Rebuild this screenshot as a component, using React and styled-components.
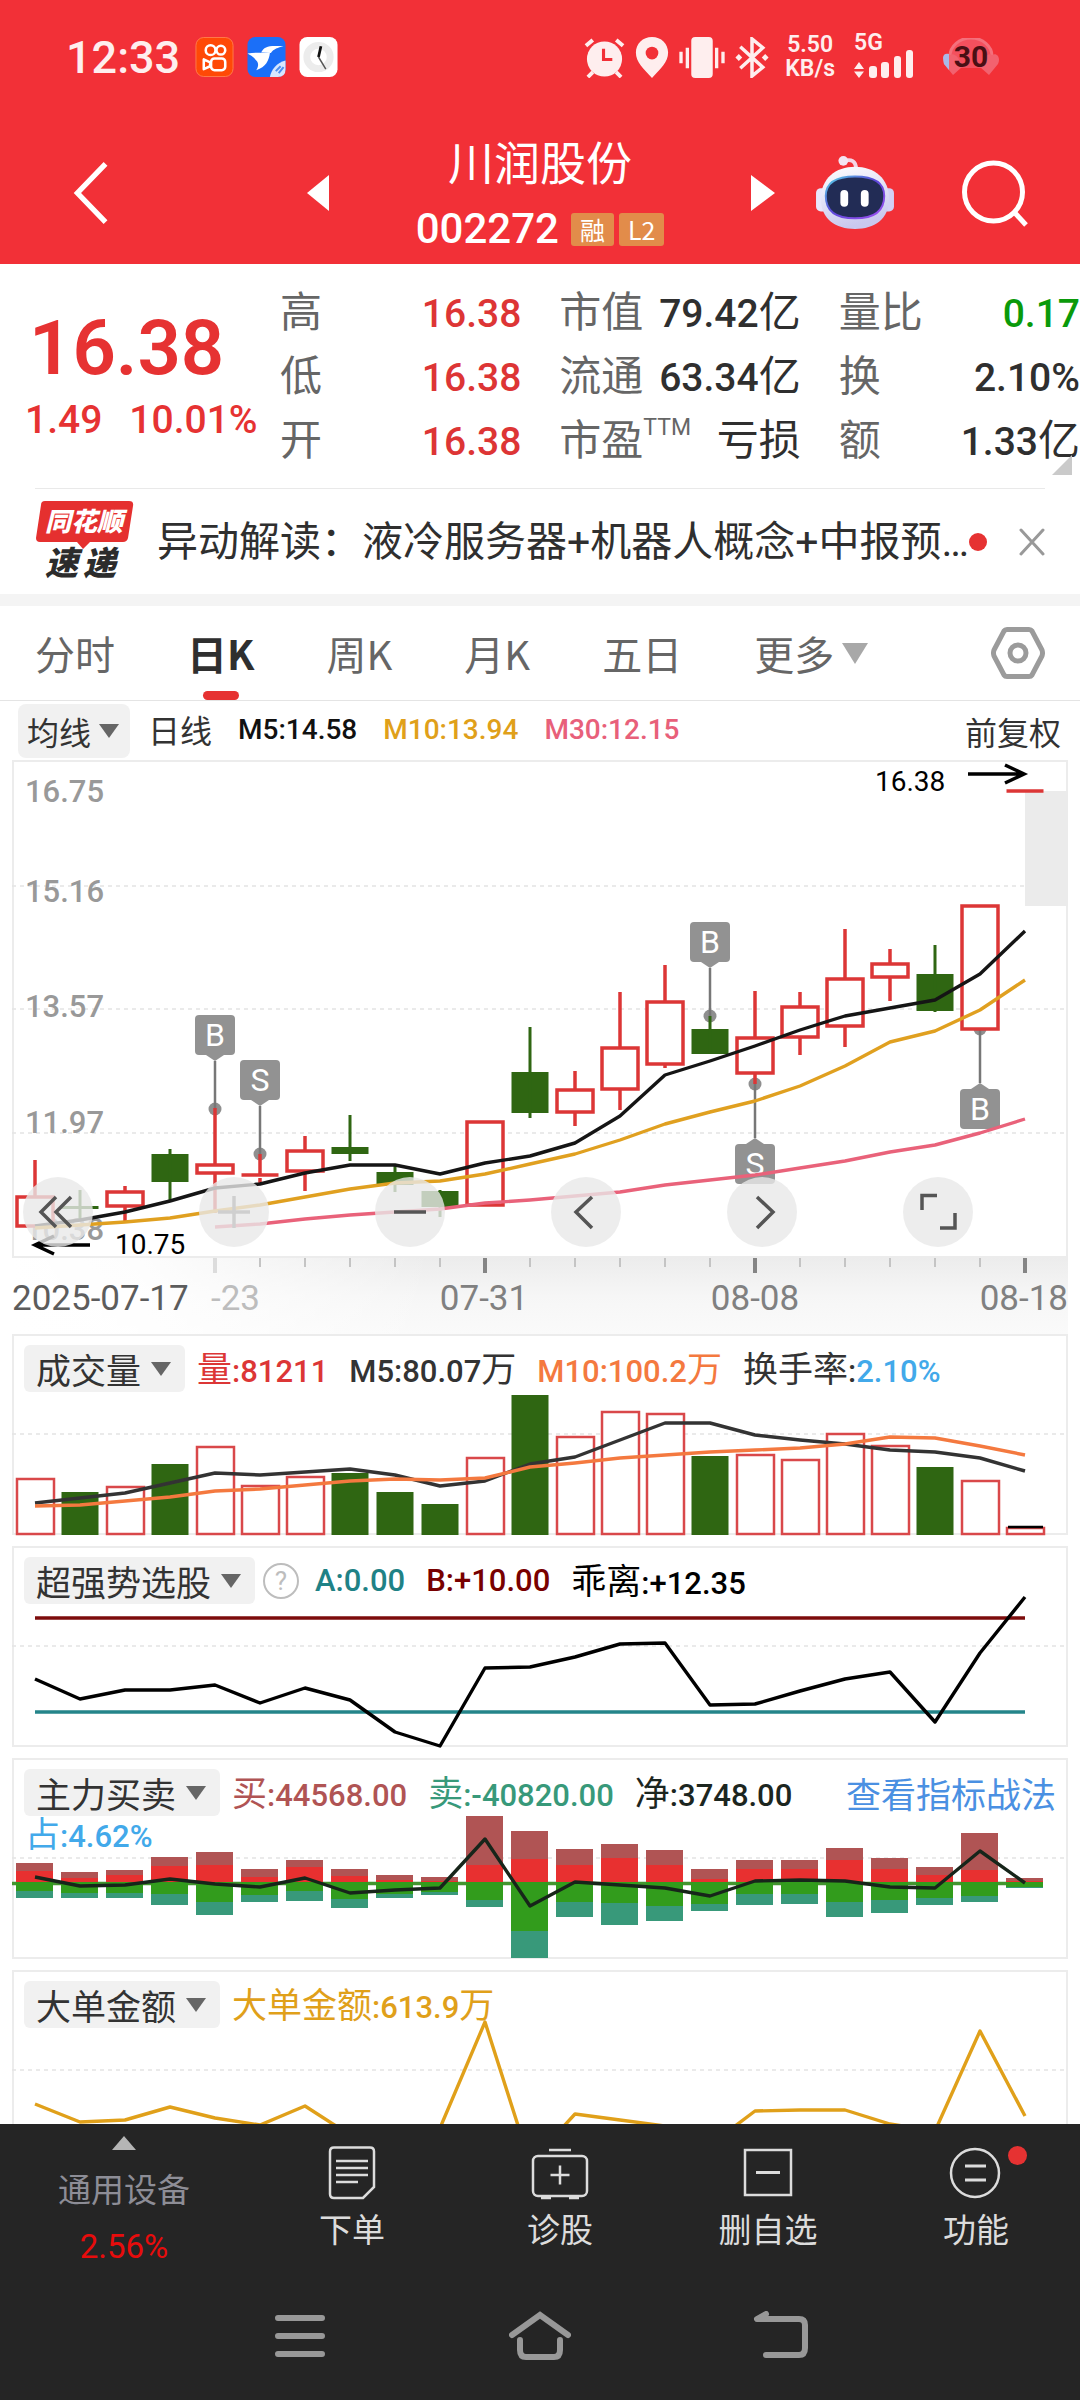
import React from "react";
import styled, { createGlobalStyle } from "styled-components";

const SANS = `"Noto Sans CJK SC", "Noto Sans", sans-serif`;
const NUM = `Roboto, "Noto Sans CJK SC", sans-serif`;

/* ---------- data ---------- */

const stats = [
  [
    { label: "高", value: "16.38", color: "#dd3535" },
    { label: "低", value: "16.38", color: "#dd3535" },
    { label: "开", value: "16.38", color: "#dd3535" },
  ],
  [
    { label: "市值", value: "79.42亿" },
    { label: "流通", value: "63.34亿" },
    { label: "市盈", sup: "TTM", value: "亏损" },
  ],
  [
    { label: "量比", value: "0.17", color: "#0a9a0a" },
    { label: "换", value: "2.10%" },
    { label: "额", value: "1.33亿" },
  ],
];

// [up, wick top, body top, body bottom, wick bottom]
const candles = [
  [1, 400, 437, 466, 466],
  [0, 430, 446, 449, 459],
  [1, 426, 432, 446, 462],
  [0, 389, 394, 422, 441],
  [1, 348, 405, 413, 453],
  [1, 394, 415, 418, 425],
  [1, 376, 391, 411, 431],
  [0, 355, 387, 394, 401],
  [0, 406, 412, 425, 432],
  [0, 430, 431, 447, 457],
  [1, 361, 362, 445, 445],
  [0, 267, 312, 353, 358],
  [1, 311, 330, 352, 366],
  [1, 232, 288, 329, 350],
  [1, 205, 242, 304, 308],
  [0, 256, 269, 294, 294],
  [1, 231, 278, 313, 324],
  [1, 232, 247, 277, 295],
  [1, 169, 219, 266, 287],
  [1, 189, 204, 217, 241],
  [0, 185, 214, 251, 252],
  [1, 146, 146, 269, 269],
  [1, 31, 31, 31, 31],
];
const ma5 = [466, 460, 452, 441, 428, 424, 413, 405, 405, 414, 403, 396, 383, 356, 315, 301, 286, 270, 256, 248, 240, 214, 171];
const ma10 = [468, 465, 462, 458, 451, 445, 437, 429, 423, 421, 414, 404, 394, 380, 364, 352, 341, 326, 306, 282, 271, 250, 220];
const ma30 = [467, 464, 459, 455, 452, 449, 443, 440, 436, 432, 425, 420, 415, 408, 401, 392, 385, 373, 359];

const volumeTops = [145, 158, 153, 130, 113, 152, 143, 139, 158, 170, 124, 61, 103, 78, 80, 122, 121, 126, 100, 112, 133, 147, 194];
const volumeMa5 = [169, 164, 159, 149, 139, 141, 138, 135, 141, 152, 147, 130, 123, 106, 89, 89, 101, 106, 110, 116, 118, 124, 137];
const volumeMa10 = [172, 171, 167, 163, 157, 155, 151, 147, 145, 146, 144, 133, 129, 124, 121, 118, 116, 114, 110, 103, 104, 112, 121];

const bias = [133, 153, 144, 144, 139, 157, 142, 154, 186, 200, 122, 121, 111, 98, 97, 159, 158, 145, 133, 126, 176, 107, 51];

// [big buy, buy, sell, big sell]
const flows = [
  [105, 113, 133, 140],
  [114, 120, 135, 140],
  [112, 117, 135, 140],
  [99, 108, 136, 147],
  [94, 107, 144, 157],
  [111, 119, 137, 144],
  [102, 109, 133, 143],
  [111, 118, 141, 150],
  [117, 122, 136, 140],
  [119, 123, 134, 137],
  [58, 107, 142, 149],
  [73, 101, 173, 200],
  [91, 107, 144, 159],
  [86, 100, 145, 167],
  [92, 107, 148, 163],
  [111, 121, 146, 153],
  [102, 111, 136, 147],
  [102, 111, 136, 146],
  [90, 102, 144, 159],
  [100, 111, 142, 155],
  [109, 117, 140, 147],
  [75, 112, 138, 144],
  [120, 123, 129, 130],
];
const netFlow = [119, 128, 127, 121, 126, 129, 120, 135, 132, 130, 81, 148, 124, 127, 130, 138, 123, 122, 123, 129, 130, 93, 125];
const bigOrders = [134, 152, 150, 137, 148, 155, 136, 165, 185, 158, 52, 193, 144, 150, 156, 175, 141, 140, 140, 154, 161, 61, 146];

const markers = [
  { i: 4, letter: "B", dot: 349, box: 255 },
  { i: 5, letter: "S", dot: 394, box: 300 },
  { i: 15, letter: "B", dot: 256, box: 162 },
  { i: 16, letter: "S", dot: 324, box: 384 },
  { i: 21, letter: "B", dot: 269, box: 329 },
];

const xAt = (i) => 23 + 45 * i;
const toPoints = (values, start = 0) =>
  values.map((y, i) => `${xAt(i + start)},${y}`).join(" ");

/* ---------- charts ---------- */

const Line = ({ values, start, color, width = 3.4 }) => (
  <polyline
    points={toPoints(values, start)}
    fill="none"
    stroke={color}
    strokeWidth={width}
    strokeLinejoin="round"
  />
);

const Frame = ({ height, grid }) => (
  <>
    <rect x="1" y="1" width="1054" height={height} fill="#fff" stroke="#ececec" strokeWidth="2" />
    {grid.map((y) => (
      <line key={y} x1="0" x2="1056" y1={y} y2={y} stroke="#e4e4e4" strokeWidth="1.5" strokeDasharray="4 4" />
    ))}
  </>
);

const Marker = ({ i, letter, dot, box }) => {
  const x = xAt(i);
  const above = box < dot;
  const edge = above ? box + 40 : box;
  const tip = above ? edge + 6 : edge - 6;
  return (
    <g>
      <circle cx={x} cy={dot} r="6.5" fill="#8f8f8f" />
      <line x1={x} x2={x} y1={dot} y2={tip} stroke="#777" strokeWidth="2.5" />
      <rect x={x - 20} y={box} width="40" height="40" rx="4" fill="#929292" />
      <path d={`M${x - 9} ${edge}L${x} ${tip}L${x + 9} ${edge}Z`} fill="#929292" />
      <ChartText x={x} y={box + 31} $size={32} $color="#fff" textAnchor="middle">
        {letter}
      </ChartText>
    </g>
  );
};

const Candle = ({ data, i }) => {
  const [up, high, top, bottom, low] = data;
  const x = xAt(i);
  if (!up) {
    return (
      <g fill="#2f6612">
        <rect x={x - 18.5} y={top} width="37" height={bottom - top} />
        <rect x={x - 1.5} y={high} width="3" height={low - high} />
      </g>
    );
  }
  return (
    <g stroke="#dc3636" strokeWidth="3.5">
      <line x1={x} x2={x} y1={high} y2={top} />
      <line x1={x} x2={x} y1={bottom} y2={low} />
      {bottom - top < 4 ? (
        <line x1={x - 18.5} x2={x + 18.5} y1={top} y2={top} />
      ) : (
        <rect x={x - 18} y={top} width="36" height={bottom - top} fill="#fff" />
      )}
    </g>
  );
};

const KLineChart = () => (
  <ChartSvg viewBox="0 0 1056 574" role="img" aria-label="日K线">
    <defs>
      <linearGradient id="axisShade" x1="0" y1="0" x2="0" y2="1">
        <stop offset="0" stopColor="#ececec" />
        <stop offset="0.5" stopColor="#f6f6f6" />
        <stop offset="1" stopColor="#fafafa" />
      </linearGradient>
      <linearGradient id="axisFade" x1="0" y1="0" x2="1" y2="0">
        <stop offset="0" stopColor="#fff" />
        <stop offset="0.3" stopColor="#fff" stopOpacity="0.9" />
        <stop offset="1" stopColor="#fff" stopOpacity="0" />
      </linearGradient>
    </defs>
    <rect x="0" y="498" width="1056" height="76" fill="url(#axisShade)" />
    <rect x="0" y="498" width="420" height="76" fill="url(#axisFade)" />
    <Frame height={496} grid={[126, 249, 373]} />
    <rect x="1013" y="31" width="43" height="115" fill="#ebebeb" />
    <AxisLabel x="13" y="42">16.75</AxisLabel>
    <AxisLabel x="13" y="142">15.16</AxisLabel>
    <AxisLabel x="13" y="257">13.57</AxisLabel>
    <AxisLabel x="13" y="373">11.97</AxisLabel>
    <AxisLabel x="13" y="480">10.38</AxisLabel>
    {markers.map((m) => <Marker key={m.i} {...m} />)}
    {candles.map((c, i) => <Candle key={i} data={c} i={i} />)}
    <Line values={ma5} color="#151515" />
    <Line values={ma10} color="#e0a020" />
    <Line values={ma30} start={4} color="#e9627a" />

    <g stroke="#000" strokeWidth="3.5" fill="none">
      <path d="M78 485H24M42 476L23 485L42 494" />
      <path d="M956 14H1011M993 5L1012 14L993 23" />
    </g>
    <ChartText x="103" y="494" $size={28} $color="#000">10.75</ChartText>
    <ChartText x="863" y="31" $size={28} $color="#000">16.38</ChartText>

    {candles.map((_, i) => {
      if (i < 4) return null;
      const major = (i - 4) % 6 === 0;
      return (
        <rect
          key={i}
          x={xAt(i) - (major ? 2 : 1)}
          y="498"
          width={major ? 4 : 2}
          height={major ? 15 : 9}
          fill={i === 4 ? "#dcdcdc" : major ? "#858585" : "#c4c4c4"}
        />
      );
    })}
    <DateLabel x="0" y="550" $color="#5c5c5c">2025-07-17</DateLabel>
    <DateLabel x="248" y="550" textAnchor="end" $color="#bdbdbd">-23</DateLabel>
    <DateLabel x="472" y="550" textAnchor="middle">07-31</DateLabel>
    <DateLabel x="743" y="550" textAnchor="middle">08-08</DateLabel>
    <DateLabel x="1056" y="550" textAnchor="end">08-18</DateLabel>
  </ChartSvg>
);

const VolumeChart = () => (
  <ChartSvg viewBox="0 0 1056 202" role="img" aria-label="成交量">
    <Frame height={199} grid={[100]} />
    {volumeTops.map((y, i) =>
      candles[i][0] ? (
        <rect key={i} x={xAt(i) - 18} y={y} width="37" height={200 - y} fill="#fff" stroke="#d9484a" strokeWidth="2.5" />
      ) : (
        <rect key={i} x={xAt(i) - 18.5} y={y} width="37" height={201 - y} fill="#2f6612" />
      )
    )}
    <line x1="996" x2="1031" y1="193" y2="193" stroke="#000" strokeWidth="2.5" />
    <Line values={volumeMa5} color="#333" />
    <Line values={volumeMa10} color="#f4793f" />
  </ChartSvg>
);

const BiasChart = () => (
  <ChartSvg viewBox="0 0 1056 202" role="img" aria-label="超强势选股">
    <Frame height={199} grid={[100]} />
    <line x1="23" x2="1013" y1="72" y2="72" stroke="#7d0c0c" strokeWidth="3.5" />
    <line x1="23" x2="1013" y1="166" y2="166" stroke="#24858a" strokeWidth="3.5" />
    <Line values={bias} color="#000" />
  </ChartSvg>
);

const FlowChart = () => (
  <ChartSvg viewBox="0 0 1056 202" role="img" aria-label="主力买卖">
    <Frame height={199} grid={[100]} />
    <line x1="0" x2="1031" y1="125.500" y2="125.500" stroke="#43952f" strokeWidth="3.5" />
    {flows.map(([bigBuy, buy, sell, bigSell], i) => (
      <g key={i}>
        <rect x={xAt(i) - 19} y={bigBuy} width="37" height={buy - bigBuy} fill="#b05454" />
        <rect x={xAt(i) - 19} y={buy} width="37" height={124 - buy} fill="#e83030" />
        <rect x={xAt(i) - 19} y="124" width="37" height={sell - 124} fill="#329c1c" />
        <rect x={xAt(i) - 19} y={sell} width="37" height={bigSell - sell} fill="#38997a" />
      </g>
    ))}
    <Line values={netFlow} color="#17251a" />
  </ChartSvg>
);

const OrderChart = () => (
  <ChartSvg viewBox="0 0 1056 202" role="img" aria-label="大单金额">
    <Frame height={199} grid={[100]} />
    <Line values={bigOrders} color="#e0a01a" />
  </ChartSvg>
);

/* ---------- page ---------- */

// figures are medium weight, the Chinese characters round them are regular
const Mixed = ({ text }) =>
  text
    .split(/([\u4e00-\u9fff]+)/)
    .filter(Boolean)
    .map((part, i) => (/[\u4e00-\u9fff]/.test(part) ? <Han key={i}>{part}</Han> : part));

const Reading = ({ text, color }) => (
  <Value $color={color}>
    <Mixed text={text} />
  </Value>
);

const Caret = () => (
  <svg width="20" height="14" viewBox="0 0 20 14" aria-hidden="true">
    <path d="M0 0H20L10 14Z" fill="#666" />
  </svg>
);

const StatusBar = () => (
  <Status>
    <Clock>12:33</Clock>
    <svg width="39" height="40" viewBox="0 0 39 41">
      <rect x="0.500" y="0.500" width="38" height="40" rx="8" fill="#ff4906" stroke="#ff7b4a" />
      <g fill="none" stroke="#fff" strokeWidth="2.600">
        <circle cx="15.500" cy="13.500" r="5" />
        <circle cx="26" cy="13.500" r="4.500" />
        <rect x="16" y="22" width="14.500" height="12" rx="3.500" />
        <path d="M15 26L8.500 23V33L15 30Z" strokeLinejoin="round" />
      </g>
    </svg>
    <svg width="39" height="40" viewBox="0 0 39 41">
      <rect width="39" height="41" rx="8" fill="#1b6ff8" />
      <path d="M0 17C8 15.500 14 16.500 23 16.500C22 24 19 31 9 34C12 29 11 26 9 24C6 20 3 19 0 17Z" fill="#fff" />
      <path d="M14 16C17 9 23 8.500 37 9.500C31 11 27 12 24 16.500Z" fill="#fff" />
      <path d="M39 24V33Q39 41 31 41H23C24 34 30 26 39 24Z" fill="#d7e7ff" />
      <path d="M29 35L34 30M32 37L37 31" stroke="#4b8df0" strokeWidth="2" />
    </svg>
    <svg width="39" height="40" viewBox="0 0 39 41">
      <rect width="39" height="41" rx="8" fill="#fff" />
      <circle cx="19.500" cy="20.500" r="12" fill="none" stroke="#ececec" strokeWidth="7" />
      <path d="M19.500 20.500L22 9.500" stroke="#111" strokeWidth="2.800" />
      <path d="M19.500 20.500L27 33" stroke="#555" strokeWidth="1.500" />
    </svg>
    <StatusIcons>
      <svg width="41" height="41" viewBox="0 0 42 42">
        <circle cx="21" cy="22.500" r="18" fill="#feeeee" />
        <path d="M20 12V23H29" fill="none" stroke="#f23037" strokeWidth="3.200" />
        <path d="M2 9L9 3M40 9L33 3M9 36L4 41M33 36L38 41" stroke="#feeeee" strokeWidth="4" />
      </svg>
      <svg width="34" height="41" viewBox="0 0 34 42">
        <path d="M17 0C26.500 0 33.500 7 33.500 16C33.500 26 26 32 17 42C8 32 0.500 26 0.500 16C0.500 7 7.500 0 17 0Z" fill="#feeeee" />
        <circle cx="17" cy="16.500" r="6.500" fill="#f23037" />
      </svg>
      <svg width="46" height="41" viewBox="0 0 46 42">
        <rect x="12" width="22" height="42" rx="4" fill="#feeeee" />
        <path d="M1.500 15V27M8 11V32M38 11V32M44.500 15V27" stroke="#feeeee" strokeWidth="3.400" />
      </svg>
      <svg width="34" height="41" viewBox="0 0 34 42">
        <path d="M5 10L28 31L17 40V2L28 11L5 32" fill="none" stroke="#feeeee" strokeWidth="3.600" />
        <path d="M0 21L3.500 17.500L7 21L3.500 24.500ZM27 21L30.500 17.500L34 21L30.500 24.500Z" fill="#feeeee" />
      </svg>
      <NetSpeed>
        <span>5.50</span>
        <span>KB/s</span>
      </NetSpeed>
      <Signal>
        <span>5G</span>
        <svg width="60" height="28" viewBox="0 0 60 28">
          <path d="M0 19L5 12L10 19ZM0 21.500L5 28L10 21.500Z" fill="#feeeee" />
          <g fill="#feeeee">
            <rect x="15" y="16" width="8" height="12" rx="3" />
            <rect x="27" y="12" width="8" height="16" rx="3" />
            <rect x="40" y="6" width="7" height="22" rx="3" />
            <rect x="52" y="0" width="7" height="28" rx="3" />
          </g>
        </svg>
      </Signal>
      <Battery>
        <svg width="58" height="38" viewBox="0 0 58 38">
          <path d="M8 18A21 18 0 0 1 50 18V30H8Z" fill="#f4505e" />
          <path d="M8 18A21 18 0 0 1 50 18" fill="none" stroke="#f4707c" strokeWidth="3" />
          <path d="M11 37L2 26C-1 20 3 14 8 17C12 14 18 20 20 29Z" fill="#f2626f" />
          <path d="M1 20C1 16 4 15 7 16V32L2 26Z" fill="#a9b9e8" />
          <path d="M47 37L56 26C59 20 55 14 50 17C46 14 40 20 38 29Z" fill="#f2626f" />
        </svg>
        <BatteryText>30</BatteryText>
      </Battery>
    </StatusIcons>
  </Status>
);

const Robot = () => (
  <svg width="80" height="76" viewBox="0 0 80 78">
    <defs>
      <linearGradient id="shell" x1="0" y1="0" x2="0.300" y2="1">
        <stop offset="0" stopColor="#fff" />
        <stop offset="1" stopColor="#c9c8ee" />
      </linearGradient>
      <linearGradient id="visor" x1="0" y1="0" x2="1" y2="1">
        <stop offset="0" stopColor="#56d7e6" />
        <stop offset="0.450" stopColor="#5a48d8" />
        <stop offset="1" stopColor="#a050f0" />
      </linearGradient>
    </defs>
    <path d="M29 6C36 4 41 6 41 14" fill="none" stroke="#f4d6e6" strokeWidth="4" />
    <circle cx="28" cy="6" r="5" fill="#f4e4f2" />
    <rect x="0" y="34" width="12" height="24" rx="5" fill="#e8e6fb" />
    <rect x="68" y="34" width="12" height="24" rx="5" fill="#d3d0f5" />
    <path d="M40 12C60 12 75 24 75 45C75 66 60 76 40 76C20 76 5 66 5 45C5 24 20 12 40 12Z" fill="url(#shell)" />
    <path d="M40 22C57 22 70 27 70 42C70 59 58 65 40 65C22 65 10 59 10 42C10 27 23 22 40 22Z" fill="#222c55" stroke="url(#visor)" strokeWidth="2" />
    <rect x="25" y="36" width="8" height="17" rx="4" fill="#fff" />
    <rect x="46" y="36" width="8" height="17" rx="4" fill="#fff" />
  </svg>
);

const NewsLogo = () => (
  <svg width="98" height="86" viewBox="0 -2 98 86" role="img" aria-label="同花顺速递">
    <path d="M9 0H93Q98 0 97 5L92 37Q91 41 87 41H54L47 48L41 41H4Q0 41 0 37L5 4Q5 0 9 0Z" fill="#e5302f" />
    <LogoText x="9" y="30" $size={26} $color="#fff">同花顺</LogoText>
    <LogoText x="9" y="74" $size={33} $color="#2c2c2c">速</LogoText>
    <LogoText x="47" y="74" $size={33} $color="#2c2c2c">递</LogoText>
  </svg>
);

const controls = [
  { label: "回到最左", d: "M33 20L18 35L33 50M48 20L33 35L48 50" },
  { label: "放大", d: "M19 35H51M35 19V51", faint: true },
  { label: "缩小", d: "M19 35H51" },
  { label: "左移", d: "M41 20L25 35L41 51" },
  { label: "右移", d: "M30 20L46 35L30 51" },
  { label: "全屏", d: "M34 18.500H19V33M52 36V51H37" },
];

const tabs = ["分时", "日K", "周K", "月K", "五日"];

const App = () => {
  return (
    <Screen>
      <GlobalStyle />
      <Header>
        <StatusBar />
        <NavRow>
          <NavSide>
            <IconButton aria-label="返回">
              <svg width="36" height="64" viewBox="0 0 36 66">
                <path d="M33 3L4 33L33 63" fill="none" stroke="#fff" strokeWidth="5.500" />
              </svg>
            </IconButton>
            <IconButton aria-label="上一只">
              <svg width="22" height="36" viewBox="0 0 22 36"><path d="M22 0V36L0 18Z" fill="#fff" /></svg>
            </IconButton>
          </NavSide>
          <TitleBlock>
            <StockName>川润股份</StockName>
            <CodeLine>
              <StockCode>002272</StockCode>
              <Tag>融</Tag>
              <Tag>L2</Tag>
            </CodeLine>
          </TitleBlock>
          <NavSide $right>
            <IconButton aria-label="下一只">
              <svg width="24" height="36" viewBox="0 0 24 36"><path d="M0 0V36L24 18Z" fill="#fff" /></svg>
            </IconButton>
            <AssistantButton aria-label="智能助手"><Robot /></AssistantButton>
            <IconButton aria-label="搜索">
              <svg width="66" height="68" viewBox="0 0 66 68">
                <circle cx="31.500" cy="33" r="29" fill="none" stroke="#fff" strokeWidth="5" />
                <path d="M53 54L64 66" stroke="#fff" strokeWidth="5" />
              </svg>
            </IconButton>
          </NavSide>
        </NavRow>
      </Header>

      <Content>
        <Quote>
          <PriceBlock>
            <Price>16.38</Price>
            <Change>
              <span>1.49</span>
              <span>10.01%</span>
            </Change>
          </PriceBlock>
          <StatGrid>
            {stats.map((col, c) => (
              <StatColumn key={c}>
                {col.map((s) => (
                  <Stat key={s.label}>
                    <dt>
                      {s.label}
                      {s.sup && <sup>{s.sup}</sup>}
                    </dt>
                    <StatValue $color={s.color}><Mixed text={s.value} /></StatValue>
                  </Stat>
                ))}
              </StatColumn>
            ))}
          </StatGrid>
          <Corner />
        </Quote>

        <News>
          <NewsLogo />
          <NewsTitle href="#news">异动解读：液冷服务器+机器人概念+中报预…</NewsTitle>
          <Dot />
          <IconButton aria-label="关闭">
            <svg width="26" height="28" viewBox="0 0 26 28">
              <path d="M2 2L24 26M24 2L2 26" stroke="#999" strokeWidth="3" strokeLinecap="round" />
            </svg>
          </IconButton>
        </News>

        <Tabs>
          {tabs.map((t) => (
            <Tab key={t} $active={t === "日K"}>{t}</Tab>
          ))}
          <Tab>
            更多
            <svg width="26" height="21" viewBox="0 0 26 21"><path d="M0 0H26L13 21Z" fill="#a8a8a8" /></svg>
          </Tab>
          <SettingsButton aria-label="设置">
            <svg width="54" height="52" viewBox="0 0 54 52">
              <path d="M16 2.500H38Q40 2.500 41 4L51 23Q52 26 51 29L41 48Q40 49.500 38 49.500H16Q14 49.500 13 48L3 29Q2 26 3 23L13 4Q14 2.500 16 2.500Z" fill="none" stroke="#9b9b9b" strokeWidth="5" />
              <circle cx="27" cy="26" r="8" fill="none" stroke="#9b9b9b" strokeWidth="5" />
            </svg>
          </SettingsButton>
        </Tabs>

        <MaRow>
          <SmallPicker>均线<Caret /></SmallPicker>
          <MaName>日线</MaName>
          <MaValue $color="#111">M5:14.58</MaValue>
          <MaValue $color="#e0a01a">M10:13.94</MaValue>
          <MaValue $color="#e8607a">M30:12.15</MaValue>
          <Adjust>前复权</Adjust>
        </MaRow>

        <Charts>
          <Panel>
            <KLineChart />
            <ControlRow>
              {controls.map((c) => (
                <Control key={c.label} aria-label={c.label}>
                  <svg width="70" height="70" viewBox="0 0 70 70">
                    <path d={c.d} fill="none" stroke={c.faint ? "#cfcfcf" : "#555"} strokeWidth="3.500" />
                  </svg>
                </Control>
              ))}
            </ControlRow>
          </Panel>

          <Panel>
            <VolumeChart />
            <Legend>
              <Picker>成交量<Caret /></Picker>
              <Reading color="#dc3636" text="量:81211" />
              <Reading color="#333" text="M5:80.07万" />
              <Reading color="#f4793f" text="M10:100.2万" />
              <Turnover>
                <Reading color="#333" text="换手率:" />
                <Reading color="#42a9ea" text="2.10%" />
              </Turnover>
            </Legend>
          </Panel>

          <Panel>
            <BiasChart />
            <Legend>
              <Picker>超强势选股<Caret /></Picker>
              <Help aria-label="说明">?</Help>
              <Reading color="#1f8286" text="A:0.00" />
              <Reading color="#780000" text="B:+10.00" />
              <Reading color="#000" text="乖离:+12.35" />
            </Legend>
          </Panel>

          <Panel>
            <FlowChart />
            <Legend>
              <Picker>主力买卖<Caret /></Picker>
              <Reading color="#b05454" text="买:44568.00" />
              <Reading color="#38997a" text="卖:-40820.00" />
              <Reading color="#1c261f" text="净:3748.00" />
              <GuideLink href="#guide">查看指标战法</GuideLink>
            </Legend>
            <SecondLine>
              <Reading color="#42a9ea" text="占:4.62%" />
            </SecondLine>
          </Panel>

          <Panel>
            <OrderChart />
            <Legend>
              <Picker>大单金额<Caret /></Picker>
              <Reading color="#e0a01a" text="大单金额:613.9万" />
            </Legend>
          </Panel>
        </Charts>
      </Content>

      <Footer>
        <ActionBar>
          <Sector>
            <svg width="24" height="14" viewBox="0 0 24 14"><path d="M12 0L24 14H0Z" fill="#b5b5b5" /></svg>
            <SectorName>通用设备</SectorName>
            <SectorChange>2.56%</SectorChange>
          </Sector>
          <Action>
            <svg width="60" height="54" viewBox="0 0 60 54" fill="none" stroke="#dcdcdc" strokeWidth="2.500">
              <path d="M12 1.500H48Q52 1.500 52 5.500V41L41 52H12Q8 52 8 48V5.500Q8 1.500 12 1.500Z" />
              <path d="M14 15H46M14 22H46M14 29H46M14 36H36" />
            </svg>
            下单
          </Action>
          <Action>
            <svg width="60" height="54" viewBox="0 0 60 54" fill="none" stroke="#dcdcdc" strokeWidth="2.500">
              <rect x="3" y="10" width="54" height="40" rx="5" />
              <path d="M19 4H41M20.500 29H39.500M30 19.500V38.500M11 52H21M39 52H49" />
            </svg>
            诊股
          </Action>
          <Action>
            <svg width="60" height="54" viewBox="0 0 60 54" fill="none" stroke="#dcdcdc" strokeWidth="2.500">
              <rect x="7" y="4" width="46" height="45" />
              <path d="M18 26.500H42" strokeWidth="3" />
            </svg>
            删自选
          </Action>
          <Action>
            <svg width="60" height="54" viewBox="0 0 60 54" fill="none" stroke="#dcdcdc" strokeWidth="2.500">
              <circle cx="29" cy="27" r="24" />
              <path d="M19 20H40M19 34H40" strokeWidth="3" />
            </svg>
            功能
            <Badge />
          </Action>
        </ActionBar>
        <SystemNav>
          <IconButton aria-label="最近任务">
            <svg width="62" height="50" viewBox="0 0 62 50">
              <path d="M9 7H53M9 25H53M9 43H53" stroke="#989898" strokeWidth="6" strokeLinecap="round" />
            </svg>
          </IconButton>
          <IconButton aria-label="主页">
            <svg width="62" height="50" viewBox="0 0 62 50" fill="none" stroke="#989898" strokeWidth="6" strokeLinecap="round">
              <path d="M3 24L31 4L59 24M11 29V39Q11 46 17 46H45Q51 46 51 39V29" />
            </svg>
          </IconButton>
          <IconButton aria-label="返回上一页">
            <svg width="62" height="50" viewBox="0 0 62 50" fill="none" stroke="#989898" strokeWidth="6" strokeLinecap="round" strokeLinejoin="round">
              <path d="M17 3L8 8H50Q56 8 56 14V37Q56 44 50 44H17" />
            </svg>
          </IconButton>
        </SystemNav>
      </Footer>
    </Screen>
  );
};

/* ---------- styles ---------- */

const GlobalStyle = createGlobalStyle`
  * {
    box-sizing: border-box;
  }
  body {
    margin: 0;
    background: #fff;
    font-family: ${SANS};
  }
  button {
    font: inherit;
    color: inherit;
    border: 0;
    padding: 0;
    background: none;
  }
  svg {
    display: block;
    flex: none;
  }
`;

const Screen = styled.div`
  height: 100vh;
  display: flex;
  flex-direction: column;
`;

const Header = styled.header`
  flex: none;
  background: #f23037;
  color: #fff;
`;

const Status = styled.div`
  height: 116px;
  padding: 0 80px 2px 66px;
  display: flex;
  align-items: center;
  gap: 13px;
  font-family: ${NUM};
  color: #feeeee;
`;

const Clock = styled.span`
  font-size: 45px;
  font-weight: 500;
  margin-right: 2px;
`;

const StatusIcons = styled.div`
  margin-left: auto;
  display: flex;
  align-items: center;
  gap: 10px;
`;

const NetSpeed = styled.div`
  display: flex;
  flex-direction: column;
  align-items: center;
  margin-left: 6px;
  font-size: 23px;
  line-height: 24px;
  font-weight: 600;
`;

const Signal = styled.div`
  display: flex;
  flex-direction: column;
  margin-left: 9px;
  font-size: 23px;
  line-height: 14px;
  font-weight: 600;
`;

const Battery = styled.div`
  display: grid;
  place-items: center;
  margin-left: 18px;
  > * {
    grid-area: 1 / 1;
  }
`;

const BatteryText = styled.span`
  font-size: 30px;
  line-height: 38px;
  font-weight: 700;
  color: #4a0f14;
`;

const NavRow = styled.div`
  height: 148px;
  padding-top: 6px;
  display: grid;
  grid-template-columns: 1fr 422px 1fr;
  align-items: center;
`;

const NavSide = styled.div`
  display: flex;
  align-items: center;
  justify-content: space-between;
  padding: ${(p) => (p.$right ? "0 52px 0 0" : "0 0 0 73px")};
`;

const IconButton = styled.button`
  display: flex;
  flex: none;
`;

const AssistantButton = styled(IconButton)`
  margin: 0 auto 0 40px;
`;

const TitleBlock = styled.div`
  display: flex;
  flex-direction: column;
  align-items: center;
  gap: 7px;
  padding-top: 3px;
`;

const StockName = styled.h1`
  margin: 0;
  font-size: 46px;
  line-height: 62px;
  font-weight: 400;
`;

const CodeLine = styled.div`
  display: flex;
  align-items: center;
  gap: 5px;
`;

const StockCode = styled.span`
  font-family: ${NUM};
  font-size: 42px;
  line-height: 62px;
  font-weight: 500;
  margin-right: 7px;
`;

const Tag = styled.span`
  height: 33px;
  padding: 0 9px;
  border-radius: 3px;
  background: #e28c4a;
  font-size: 25px;
  line-height: 33px;
`;

const Content = styled.main`
  flex: 1;
  min-height: 0;
  overflow: hidden;
`;

const Quote = styled.section`
  position: relative;
  height: 225px;
  display: flex;
  &::after {
    content: "";
    position: absolute;
    left: 35px;
    right: 35px;
    bottom: 0;
    height: 1px;
    background: #e9e9e9;
  }
`;

const PriceBlock = styled.div`
  flex: 0 0 280px;
  padding: 48px 0 0 25px;
  font-family: ${NUM};
  color: #e63232;
`;

const Price = styled.div`
  padding-left: 4px;
  font-size: 76px;
  line-height: 72px;
  font-weight: 600;
`;

const Change = styled.div`
  display: flex;
  gap: 27px;
  font-size: 39px;
  line-height: 72px;
  font-weight: 500;
`;

const StatGrid = styled.div`
  flex: 1;
  display: grid;
  grid-template-columns: repeat(3, 1fr);
  gap: 38px;
  padding-top: 13px;
`;

const StatColumn = styled.dl`
  margin: 0;
`;

const Stat = styled.div`
  display: flex;
  justify-content: space-between;
  align-items: baseline;
  height: 64px;
  line-height: 64px;
  white-space: nowrap;
  dt {
    display: flex;
    font-size: 42px;
    color: #666;
  }
  sup {
    font-family: ${NUM};
    font-size: 23px;
    line-height: 46px;
  }
`;

const Han = styled.span`
  font-family: ${SANS};
  font-weight: 400;
`;

const StatValue = styled.dd`
  margin: 0;
  font-family: ${NUM};
  font-size: 39px;
  font-weight: 500;
  color: ${(p) => p.$color || "#2f2f2f"};
  ${Han} {
    font-size: 42px;
  }
`;

const Corner = styled.i`
  position: absolute;
  right: 8px;
  bottom: 14px;
  border-left: 20px solid transparent;
  border-bottom: 20px solid #cacaca;
`;

const News = styled.section`
  height: 117px;
  padding: 0 35px 0 36px;
  display: flex;
  align-items: center;
  border-bottom: 12px solid #f4f4f4;
`;

const NewsTitle = styled.a`
  margin-left: 23px;
  font-family: ${NUM};
  font-size: 41px;
  line-height: 60px;
  color: #2f2f2f;
  text-decoration: none;
  white-space: nowrap;
`;

const Dot = styled.i`
  width: 18px;
  height: 18px;
  margin-right: auto;
  border-radius: 50%;
  background: #e63232;
`;

const Tabs = styled.nav`
  height: 95px;
  padding: 0 35px;
  display: flex;
  align-items: stretch;
  gap: 72px;
  border-bottom: 1px solid #e4e4e4;
`;

const Tab = styled.button`
  position: relative;
  display: flex;
  align-items: center;
  gap: 8px;
  font-size: 40px;
  font-weight: ${(p) => (p.$active ? 700 : 400)};
  color: ${(p) => (p.$active ? "#2f2f2f" : "#666")};
  &::after {
    content: "";
    display: ${(p) => (p.$active ? "block" : "none")};
    position: absolute;
    left: 50%;
    bottom: 0;
    width: 36px;
    height: 9px;
    margin-left: -18px;
    border-radius: 5px;
    background: #e63232;
  }
`;

const SettingsButton = styled(IconButton)`
  margin-left: auto;
  align-items: center;
`;

const MaRow = styled.div`
  height: 59px;
  padding: 0 19px 0 18px;
  display: flex;
  align-items: center;
  gap: 26px;
`;

const SmallPicker = styled.button`
  height: 54px;
  padding: 0 11px 0 9px;
  margin-right: -8px;
  display: flex;
  align-items: center;
  gap: 8px;
  border-radius: 8px;
  background: #f1f1f1;
  font-size: 32px;
  color: #333;
`;

const MaName = styled.span`
  padding-bottom: 4px;
  font-size: 32px;
  color: #333;
`;

const MaValue = styled.span`
  padding-bottom: 2px;
  font-family: ${NUM};
  font-size: 28px;
  font-weight: 500;
  color: ${(p) => p.$color};
`;

const Adjust = styled.button`
  margin-left: auto;
  font-size: 32px;
  color: #333;
`;

const Charts = styled.div`
  padding: 0 12px;
  display: flex;
  flex-direction: column;
  gap: 10px;
`;

const Panel = styled.section`
  position: relative;
  &:first-child {
    margin-bottom: -10px;
  }
`;

const ChartSvg = styled.svg`
  width: 100%;
  height: auto;
`;

const ChartText = styled.text`
  font-family: ${NUM};
  font-size: ${(p) => p.$size}px;
  fill: ${(p) => p.$color};
`;

const AxisLabel = styled.text`
  font-family: ${NUM};
  font-size: 31px;
  font-weight: 500;
  fill: #999;
`;

const DateLabel = styled.text`
  font-family: ${NUM};
  font-size: 35px;
  fill: ${(p) => p.$color || "#808080"};
`;

const LogoText = styled.text`
  font-family: ${SANS};
  font-size: ${(p) => p.$size}px;
  font-weight: 900;
  font-style: italic;
  fill: ${(p) => p.$color};
`;

const ControlRow = styled.div`
  position: absolute;
  left: 11px;
  right: 95px;
  bottom: 87px;
  display: flex;
  justify-content: space-between;
`;

const Control = styled.button`
  width: 70px;
  height: 70px;
  border-radius: 50%;
  background: rgba(232, 232, 232, 0.8);
`;

const Legend = styled.div`
  position: absolute;
  top: 11px;
  left: 12px;
  right: 12px;
  display: flex;
  align-items: center;
  height: 47px;
  gap: 21px;
  white-space: nowrap;
`;

const Picker = styled.button`
  height: 47px;
  padding: 0 14px 0 12px;
  margin-right: -9px;
  display: flex;
  align-items: center;
  gap: 10px;
  border-radius: 6px;
  background: #f1f1f1;
  font-size: 35px;
  line-height: 47px;
  color: #333;
`;

const Value = styled.span`
  font-family: ${NUM};
  font-size: 31px;
  line-height: 47px;
  font-weight: 500;
  color: ${(p) => p.$color};
  ${Han} {
    font-size: 35px;
  }
`;

const Turnover = styled.span`
  display: flex;
  align-items: baseline;
`;

const Help = styled.button`
  width: 36px;
  height: 36px;
  margin: 0 -5px 0 -4px;
  border: 2px solid #bdbdbd;
  border-radius: 50%;
  font-family: ${NUM};
  font-size: 26px;
  line-height: 32px;
  color: #bdbdbd;
`;

const GuideLink = styled.a`
  margin-left: auto;
  font-size: 35px;
  line-height: 47px;
  color: #4a90e2;
  text-decoration: none;
`;

const SecondLine = styled.div`
  position: absolute;
  top: 50px;
  left: 13px;
`;

const Footer = styled.footer`
  flex: none;
  background: #252525;
`;

const ActionBar = styled.div`
  height: 148px;
  display: grid;
  grid-template-columns: 248px repeat(4, 1fr);
`;

const Sector = styled.button`
  display: flex;
  flex-direction: column;
  align-items: center;
  padding-top: 12px;
`;

const SectorName = styled.span`
  margin-top: 10px;
  font-size: 33px;
  line-height: 56px;
  color: #8d8d96;
`;

const SectorChange = styled.span`
  font-family: ${NUM};
  font-size: 33px;
  line-height: 62px;
  color: #e80c0c;
`;

const Action = styled.button`
  position: relative;
  display: flex;
  flex-direction: column;
  align-items: center;
  padding-top: 22px;
  gap: 3px;
  font-size: 33px;
  line-height: 50px;
  color: #dcdcdc;
`;

const Badge = styled.i`
  position: absolute;
  top: 22px;
  left: calc(50% + 32px);
  width: 19px;
  height: 19px;
  border-radius: 50%;
  background: #e63232;
`;

const SystemNav = styled.div`
  height: 128px;
  display: flex;
  align-items: center;
  justify-content: center;
  gap: 178px;
`;

export default App;
